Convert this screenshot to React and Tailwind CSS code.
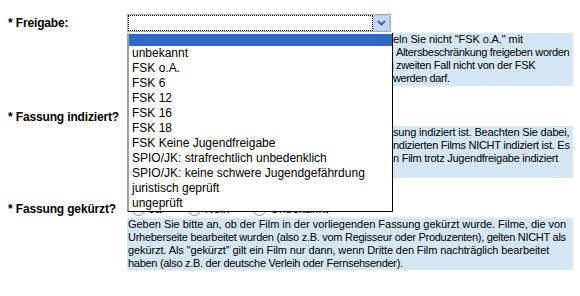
import React from "react";

const options = [
  "unbekannt",
  "FSK o.A.",
  "FSK 6",
  "FSK 12",
  "FSK 16",
  "FSK 18",
  "FSK Keine Jugendfreigabe",
  "SPIO/JK: strafrechtlich unbedenklich",
  "SPIO/JK: keine schwere Jugendgefährdung",
  "juristisch geprüft",
  "ungeprüft",
];

// pre = Anfang der Zeile (liegt unter der offenen Liste), text = sichtbarer Rest
const helpFreigabe = [
  { pre: "Geben Sie die Altersfreigabe des Filmes an. Verwechs", pw: "w-[265px]", text: 'eln Sie nicht "FSK o.A." mit', tr: "tracking-[-0.09px]" },
  { pre: '"unbekannt": Im ersten Fall ist der Film eindeutig ohne ', pw: "w-[268px]", text: "Altersbeschränkung freigeben worden", tr: "tracking-[-0.34px]" },
  { pre: "ist, während die genaue Altersfreigabe dieses Films im ", pw: "w-[268px]", text: "zweiten Fall nicht von der FSK", tr: "tracking-[-0.31px]" },
  { pre: "geprüft wurde oder aus anderen Gründen nicht belegt ", pw: "w-[265px]", text: "werden darf.", tr: "tracking-[-0.37px]" },
];

const helpIndiziert = [
  { pre: "Geben Sie bitte an, ob der Film in der vorliegenden Fas", pw: "w-[265px]", text: "sung indiziert ist. Beachten Sie dabei,", tr: "tracking-[-0.18px]" },
  { pre: "dass eine gekürzte Fassung eines bereits ungekürzt i", pw: "w-[265px]", text: "ndizierten Films NICHT indiziert ist. Es", tr: "tracking-[-0.27px]" },
  { pre: "kann jedoch auch vorkommen, dass die BPjM eine", pw: "w-[265px]", text: "n Film trotz Jugendfreigabe indiziert", tr: "tracking-[-0.25px]" },
  { pre: "hat.", pw: "w-[265px]", text: "", tr: "" },
];

const helpGekuerzt = [
  { text: "Geben Sie bitte an, ob der Film in der vorliegenden Fassung gekürzt wurde. Filme, die von", tr: "tracking-[-0.03px]" },
  { text: "Urheberseite bearbeitet wurden (also z.B. vom Regisseur oder Produzenten), gelten NICHT als", tr: "tracking-[-0.28px]" },
  { text: 'gekürzt. Als "gekürzt" gilt ein Film nur dann, wenn Dritte den Film nachträglich bearbeitet', tr: "tracking-[-0.1px]" },
  { text: "haben (also z.B. der deutsche Verleih oder Fernsehsender).", tr: "tracking-[-0.29px]" },
];

function Label({ children }) {
  return (
    <div className="w-[119px] h-[18px] shrink-0 flex items-center text-[12px] font-bold text-black tracking-[-0.15px]">
      * {children}
    </div>
  );
}

function Help({ lines, tall }) {
  return (
    <div
      className={
        (tall ? "h-[53px] mt-[1px] " : "h-[52px] ") +
        "bg-[#d5e7f5] pl-[1px] text-[11px] leading-[13px] text-black overflow-hidden"
      }
    >
      {lines.map((l, i) => (
        <div key={i} className="whitespace-nowrap flex">
          {l.pre !== undefined && (
            <span className={l.pw + " shrink-0 overflow-hidden"}>{l.pre}</span>
          )}
          <span className={l.tr}>{l.text}</span>
        </div>
      ))}
    </div>
  );
}

function Radio() {
  return <span className="w-[13px] h-[13px] shrink-0 rounded-full border border-[#8a8a8a] bg-white" />;
}

function Radios() {
  return (
    <div className="h-[18px] flex items-center text-[12px] text-black">
      <span className="ml-[5px]" />
      <Radio />
      <span className="ml-[4px]">Ja</span>
      <span className="ml-[26px]" />
      <Radio />
      <span className="ml-[4px]">Nein</span>
      <span className="ml-[24px]" />
      <Radio />
      <span className="ml-[4px]">Unbekannt</span>
    </div>
  );
}

function Select() {
  return (
    <div className="relative">
      <div className="h-[18px] w-[264px] border border-[#a5acb2] bg-white flex">
        <div className="flex-1 border border-dotted border-black" />
        <div className="w-[17px] border border-[#b4c4e6] rounded-[2px] bg-[#c6d6fa] flex items-center justify-center">
          <svg width="9" height="6" viewBox="0 0 9 6">
            <path d="M1 1 L4.5 4.5 L8 1" fill="none" stroke="#4d6185" strokeWidth="2" />
          </svg>
        </div>
      </div>
      <div className="absolute left-0 top-[19px] z-10 w-[266px] bg-white pt-[1px] border-l-2 border-l-[#a0a0a0] border-r border-r-black border-b border-b-black text-[12px] leading-[15px] text-black">
        <div className="h-[12px] bg-[#316ac5]" />
        {options.map((o) => (
          <div key={o} className="h-[15px] pl-[3px] whitespace-nowrap">
            {o}
          </div>
        ))}
      </div>
    </div>
  );
}

export default function App() {
  return (
    <div className="w-[580px] h-[296px] overflow-hidden bg-white font-['Liberation_Sans',Arial,sans-serif]">
      <div className="pl-[8px] pt-[14px] w-[573px]">
        <div className="flex">
          <Label>Freigabe:</Label>
          <div className="w-[446px]">
            <Select />
            <Help lines={helpFreigabe} tall />
          </div>
        </div>
        <div className="flex mt-[22px]">
          <Label>Fassung indiziert?</Label>
          <div className="w-[446px]">
            <Radios />
            <Help lines={helpIndiziert} />
          </div>
        </div>
        <div className="flex mt-[22px]">
          <Label>Fassung gekürzt?</Label>
          <div className="w-[446px]">
            <Radios />
            <Help lines={helpGekuerzt} />
          </div>
        </div>
      </div>
    </div>
  );
}
